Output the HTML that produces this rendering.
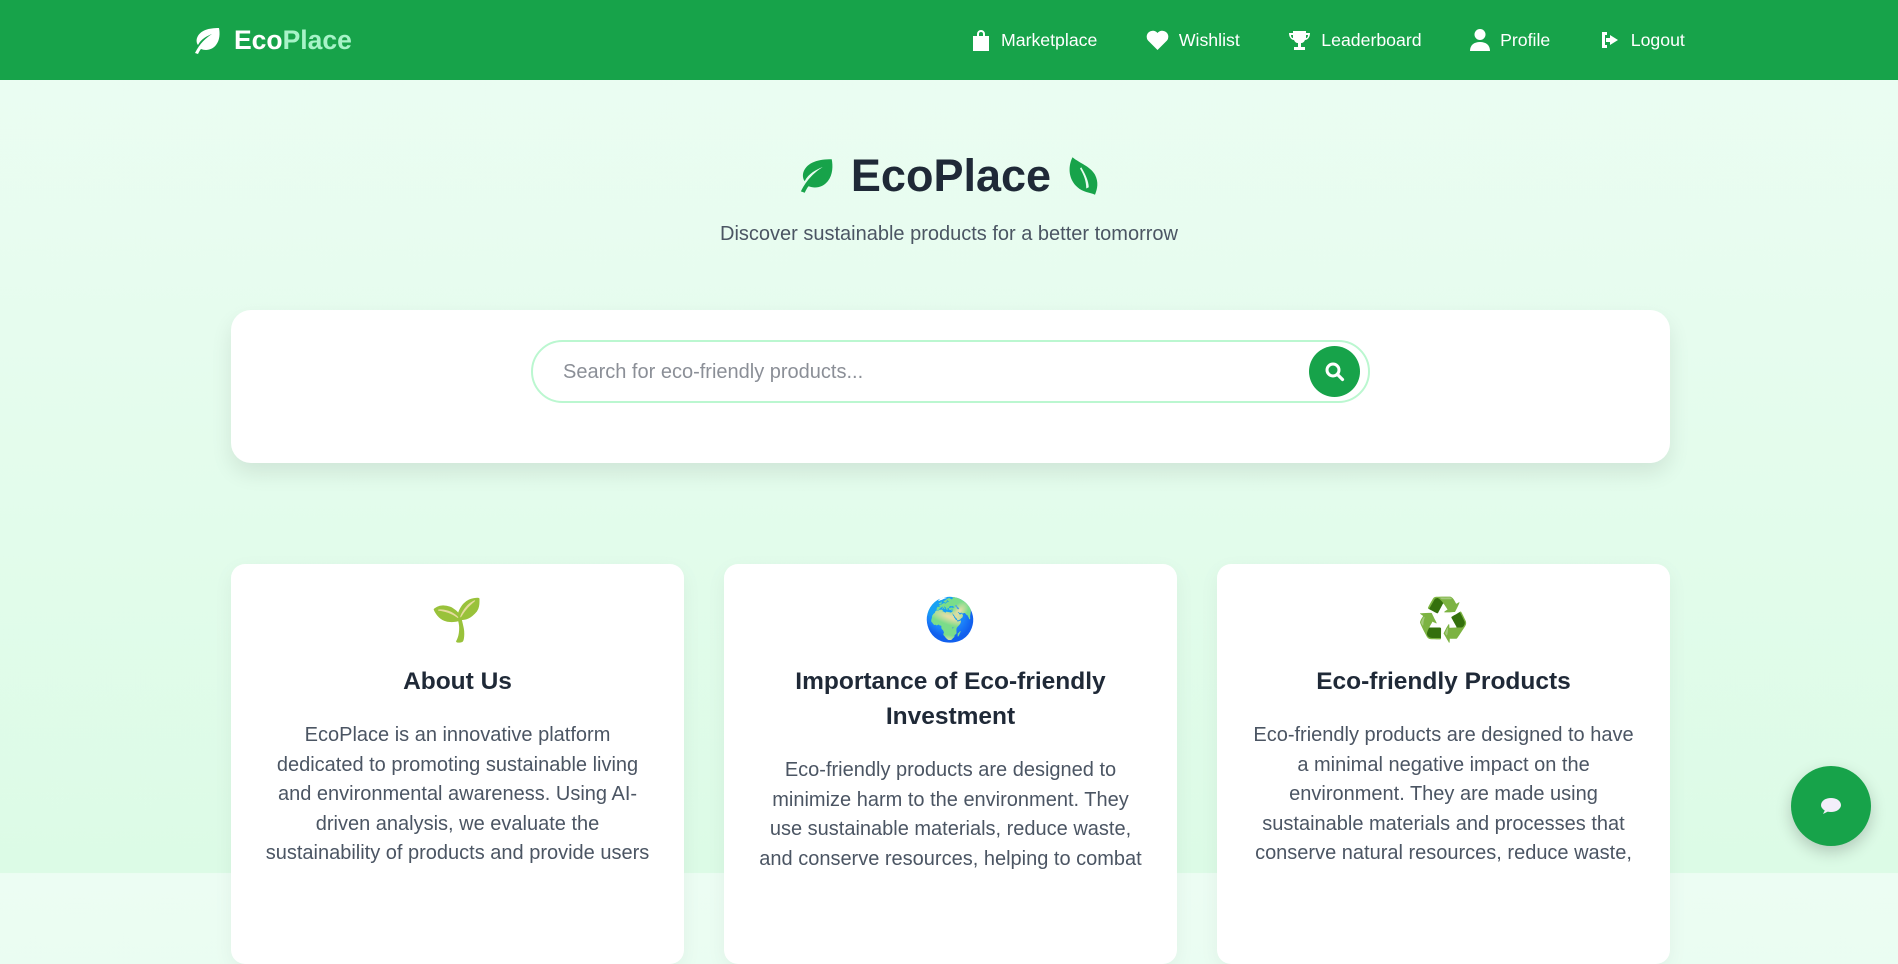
<!DOCTYPE html>
<html><head><meta charset="utf-8"><style>
*{box-sizing:border-box;margin:0;padding:0}
body{width:1898px;height:873px;overflow:hidden;font-family:"Liberation Sans",Arial,sans-serif;background:linear-gradient(180deg,#ecfdf3 0%,#dcfbe6 100%);position:relative}
nav{height:80px;background:#17a34a;position:relative}
.logo{position:absolute;left:191px;top:25px;display:flex;align-items:center;font-weight:bold;font-size:26.5px;color:#fff}
.logo svg{margin-right:13px}
.logo span{color:#a7f3c8}
.links{position:absolute;top:0;left:971px;height:80px;display:flex;align-items:center;color:#fff;font-size:17.7px}
.links a{display:flex;align-items:center;margin-right:48.5px;color:#fff;text-decoration:none}
.links a svg{margin-right:10px}
h1{position:absolute;top:150px;left:0;width:1898px;text-align:center;font-size:45px;color:#1f2937;display:flex;justify-content:center;align-items:center;gap:16px}
.sub{position:absolute;top:223px;width:1898px;text-align:center;font-size:20px;color:#4b5563}
.search{position:absolute;left:231px;top:310px;width:1439px;height:153px;background:#fff;border-radius:20px;box-shadow:0 10px 22px rgba(0,0,0,.09)}
.inp{position:absolute;left:300px;top:30px;width:839px;height:63px;border:2px solid #bbf7d0;border-radius:32px;font-size:20px;color:#8b8f97;padding:19px 0 0 30px}
.btn{position:absolute;right:8px;top:4px;width:51px;height:51px;border-radius:50%;background:#17a34a;display:flex;align-items:center;justify-content:center}
.card{position:absolute;top:564px;width:453px;height:400px;background:#fff;border-radius:14px;box-shadow:0 6px 20px rgba(0,0,0,.05);text-align:center;padding:28px 30px 0}
.em{font-size:42px;height:55px;line-height:55px}
.card h3{font-size:24.5px;color:#1f2937;line-height:35px;margin-top:17px}
.card p{font-size:20px;color:#4b5563;line-height:29.6px;margin-top:22px}
.chat{position:absolute;left:1791px;top:766px;width:80px;height:80px;border-radius:50%;background:#17a34a;box-shadow:0 6px 16px rgba(0,0,0,.2);display:flex;align-items:center;justify-content:center}
</style></head><body>
<nav>
<div class="logo"><svg width="30" height="28" viewBox="0 0 30 28"><path d="M28 1C18 1 9 3 6 11c-1 3 0 6 1 7C10 12 16 9 21 7c-6 4-12 9-17 19l3 1c1-2 2-4 3-5 5 2 11 1 15-4 4-5 4-12 3-17z" fill="#fff"/></svg>Eco<span>Place</span></div>
<div class="links">
<a><svg width="20" height="22" viewBox="0 0 20 22"><path d="M6 7V5a4 4 0 0 1 8 0v2h4v15H2V7zM8 7h4V5a2 2 0 0 0-4 0z" fill="#fff" fill-rule="evenodd"/></svg>Marketplace</a>
<a><svg width="23" height="20" viewBox="0 0 23 20"><path d="M11.5 20L2 10.5A5.5 5.5 0 0 1 11.5 3a5.5 5.5 0 0 1 9.5 7.5z" fill="#fff"/></svg>Wishlist</a>
<a><svg width="23" height="21" viewBox="0 0 23 21"><path d="M5 1h13v2h4c0 5-3 7-5 7-1 2-2 3-4 3v4h4v3H6v-3h4v-4c-2 0-3-1-4-3-2 0-5-2-5-7h4zm0 4H3c0 2 1 3 2 3zm13 0v3c1 0 2-1 2-3z" fill="#fff"/></svg>Leaderboard</a>
<a><svg width="20" height="22" viewBox="0 0 20 22"><circle cx="10" cy="5.5" r="5.5" fill="#fff"/><path d="M0 22c0-6 4-9 10-9s10 3 10 9z" fill="#fff"/></svg>Profile</a>
<a style="margin-right:0"><svg width="22" height="20" viewBox="0 0 22 20"><path d="M8 2H3v16h5v-3H6V5h2zM11 5v3H7v4h4v3l8-5z" fill="#fff"/></svg>Logout</a>
</div>
</nav>
<h1><svg width="40" height="36" viewBox="0 0 30 28"><path d="M28 1C18 1 9 3 6 11c-1 3 0 6 1 7C10 12 16 9 21 7c-6 4-12 9-17 19l3 1c1-2 2-4 3-5 5 2 11 1 15-4 4-5 4-12 3-17z" fill="#17a34a"/></svg>EcoPlace<svg width="36" height="40" viewBox="0 0 28 32"><path d="M4 1c-4 8-3 18 4 24 4 4 10 4 14 6 2-5 3-10 0-16C18 8 10 6 4 1zm7 8c3 5 6 11 6 16l-2 1c0-6-2-11-5-16z" fill="#17a34a" fill-rule="evenodd"/></svg></h1>
<div class="sub">Discover sustainable products for a better tomorrow</div>
<div class="search"><div class="inp">Search for eco-friendly products...<div class="btn"><svg width="22" height="22" viewBox="0 0 22 22"><circle cx="9" cy="9" r="6" fill="none" stroke="#fff" stroke-width="3"/><path d="M13.5 13.5l5 5" stroke="#fff" stroke-width="3.2" stroke-linecap="round"/></svg></div></div></div>
<div class="card" style="left:231px"><div class="em">🌱</div><h3>About Us</h3><p>EcoPlace is an innovative platform dedicated to promoting sustainable living and environmental awareness. Using AI-driven analysis, we evaluate the sustainability of products and provide users</p></div>
<div class="card" style="left:724px"><div class="em">🌍</div><h3>Importance of Eco-friendly Investment</h3><p>Eco-friendly products are designed to minimize harm to the environment. They use sustainable materials, reduce waste, and conserve resources, helping to combat</p></div>
<div class="card" style="left:1217px"><div class="em">♻️</div><h3>Eco-friendly Products</h3><p>Eco-friendly products are designed to have a minimal negative impact on the environment. They are made using sustainable materials and processes that conserve natural resources, reduce waste,</p></div>
<div class="chat"><svg width="22" height="18" viewBox="0 0 22 18"><ellipse cx="11" cy="8" rx="10" ry="7" fill="#f3eefa"/><path d="M5 13l-2 4 6-3z" fill="#f3eefa"/></svg></div>
</body></html>
